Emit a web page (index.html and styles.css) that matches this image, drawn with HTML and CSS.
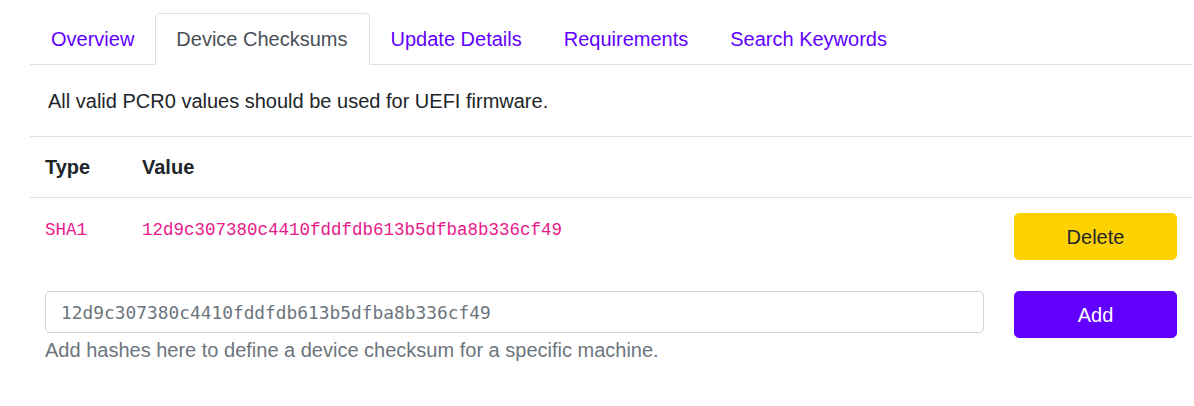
FILE: index.html
```html
<!DOCTYPE html>
<html lang="en">
<head>
<meta charset="utf-8">
<title>Device Checksums</title>
<link rel="stylesheet" href="styles.css">
</head>
<body>
<div class="page">
  <ul class="tabs">
    <li><a class="tab" href="#">Overview</a></li>
    <li><a class="tab active" href="#">Device Checksums</a></li>
    <li><a class="tab" href="#">Update Details</a></li>
    <li><a class="tab" href="#">Requirements</a></li>
    <li><a class="tab" href="#">Search Keywords</a></li>
  </ul>
  <div class="content">
    <p class="intro">All valid PCR0 values should be used for UEFI firmware.</p>
    <table class="table">
      <colgroup>
        <col class="c-type">
        <col class="c-value">
        <col class="c-action">
      </colgroup>
      <thead>
        <tr><th>Type</th><th>Value</th><th></th></tr>
      </thead>
      <tbody>
        <tr>
          <td><code>SHA1</code></td>
          <td><code>12d9c307380c4410fddfdb613b5dfba8b336cf49</code></td>
          <td><button class="btn btn-warning" type="button">Delete</button></td>
        </tr>
        <tr class="add-row">
          <td colspan="2">
            <input class="form-control" type="text" placeholder="12d9c307380c4410fddfdb613b5dfba8b336cf49">
            <div class="form-text">Add hashes here to define a device checksum for a specific machine.</div>
          </td>
          <td><button class="btn btn-primary" type="button">Add</button></td>
        </tr>
      </tbody>
    </table>
  </div>
</div>
</body>
</html>
```
FILE: styles.css
```css
* { box-sizing: border-box; }
html, body { margin: 0; padding: 0; background: #fff; }
body {
  font-family: "Liberation Sans", Arial, sans-serif;
  font-size: 20px;
  line-height: 1.5;
  color: #212529;
}
.page { padding: 13px 2px 0 30px; }

.tabs {
  list-style: none;
  margin: 0;
  padding: 0;
  display: flex;
  border-bottom: 1px solid #dee2e6;
}
.tabs li { margin-bottom: -1px; }
.tab {
  display: block;
  padding: 10px 20px;
  border: 1px solid transparent;
  border-radius: 5px 5px 0 0;
  color: #6100ff;
  text-decoration: none;
  line-height: 30px;
}
.tab.active {
  color: #495057;
  background: #fff;
  border-color: #dee2e6 #dee2e6 #fff;
  padding-right: 21px;
}

.content { padding-top: 21px; }
.intro { margin: 0 0 20px; padding-left: 18px; }

.table {
  width: 100%;
  border-collapse: collapse;
  table-layout: fixed;
}
.c-type { width: 97px; }
.c-action { width: 193px; }
.table th, .table td {
  padding: 15px;
  text-align: left;
  vertical-align: top;
  border-top: 1px solid #dee2e6;
}
.table th { font-weight: 700; }
.table .add-row td { border-top: 0; padding-top: 16px; }

code {
  font-family: "Liberation Mono", "Courier New", monospace;
  font-size: 17.5px;
  color: #e8178a;
}

.btn {
  display: block;
  width: 100%;
  height: 47px;
  padding: 7px 15px;
  font-family: "Liberation Sans", Arial, sans-serif;
  font-size: 20px;
  line-height: 30px;
  border: 1px solid transparent;
  border-radius: 5px;
  text-align: center;
}
.btn-warning { background: #fed200; border-color: #fed200; color: #212529; }
.btn-primary { background: #6100ff; border-color: #6100ff; color: #fff; }

.form-control {
  display: block;
  width: 100%;
  height: 42px;
  padding: 5px 15px;
  font-family: "DejaVu Sans Mono", monospace;
  font-size: 17.85px;
  color: #495057;
  border: 1px solid #ced4da;
  border-radius: 5px;
  background: #fff;
}
.form-control::placeholder { color: #6c757d; opacity: 1; }
.form-text {
  margin-top: 5px;
  font-size: 20px;
  line-height: 24px;
  color: #6c757d;
}
```
